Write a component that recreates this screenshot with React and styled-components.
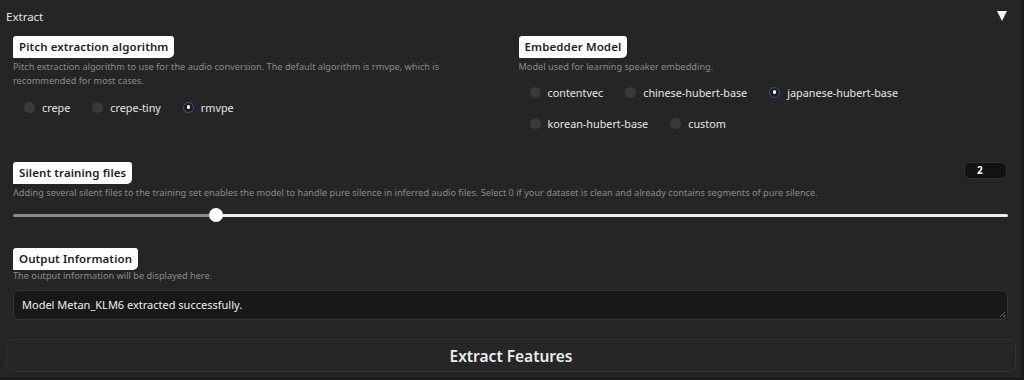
import React from "react";
import styled, { createGlobalStyle } from "styled-components";

const Global = createGlobalStyle`
  html, body { margin: 0; padding: 0; background: #1b1b1b; }
  body { font-family: "Noto Sans", "Liberation Sans", sans-serif; }
  * { box-sizing: border-box; }
`;

const Panel = styled.div`
  width: 1022px;
  height: 378px;
  background: #252525;
  border-right: 1px solid #1a1a1a;
  border-bottom: 1px solid #1a1a1a;
  padding: 7px 6px 0 6px;
  display: flex;
  flex-direction: column;
`;

const Header = styled.div`
  display: flex;
  justify-content: space-between;
  align-items: center;
  height: 18px;
  color: #e4e4e4;
  font-size: 11.5px;
  padding-right: 8px;
`;

const Arrow = styled.span`
  width: 0;
  height: 0;
  border-left: 5.5px solid transparent;
  border-right: 5.5px solid transparent;
  border-top: 10px solid #f4f4f4;
`;

const Body = styled.div`
  padding: 11px 7px 0 7px;
  display: flex;
  flex-direction: column;
`;

const Columns = styled.div`
  display: grid;
  grid-template-columns: 1fr 1fr;
  column-gap: 16px;
  height: 126px;
`;

const Block = styled.div`
  display: flex;
  flex-direction: column;
`;

const Label = styled.span`
  align-self: flex-start;
  background: #fff;
  color: #1d1d1d;
  font-size: 11.5px;
  font-weight: 600;
  height: 22px;
  line-height: 22px;
  padding: 0 6px;
  border-radius: 3px 3px 5px 0;
  letter-spacing: 0.1px;
`;

const Desc = styled.div`
  color: #8a8a8a;
  font-size: 9.2px;
  line-height: 14px;
  margin-top: ${(p) => (p.$mt !== undefined ? p.$mt : 2)}px;
  max-width: ${(p) => p.$max || "none"};
`;

const Radios = styled.div`
  display: flex;
  flex-wrap: wrap;
  column-gap: 22px;
  row-gap: 9px;
  padding-left: 11px;
  margin-top: ${(p) => p.$mt || 10}px;
  max-width: 420px;
`;

const RadioItem = styled.label`
  display: flex;
  align-items: center;
  gap: 7px;
  color: #e6e6e6;
  font-size: 10.8px;
  height: 22px;
`;

const Dot = styled.span`
  width: 11px;
  height: 11px;
  border-radius: 50%;
  background: ${(p) => (p.$on ? "#1e1e1e" : "#3a3a3a")};
  border: ${(p) => (p.$on ? "1.5px solid #3556a8" : "none")};
  display: flex;
  align-items: center;
  justify-content: center;
  &::after {
    content: "";
    display: ${(p) => (p.$on ? "block" : "none")};
    width: 3.5px;
    height: 3.5px;
    border-radius: 50%;
    background: #fff;
  }
`;

const Section = styled.div`
  display: flex;
  flex-direction: column;
  margin-top: ${(p) => p.$mt || 0}px;
`;

const TopRow = styled.div`
  display: flex;
  justify-content: space-between;
  align-items: flex-start;
`;

const NumberBox = styled.div`
  width: 43px;
  height: 17px;
  background: #121212;
  border: 1px solid #323232;
  border-radius: 6px;
  color: #fff;
  font-size: 10px;
  font-weight: 700;
  line-height: 15px;
  padding-left: 12px;
  margin-right: 1px;
`;

const Slider = styled.div`
  position: relative;
  height: 14px;
  margin-top: 8px;
  display: flex;
  align-items: center;
`;

const Track = styled.div`
  height: 3px;
  width: 100%;
  background: linear-gradient(
    to right,
    #8a8a8a 0,
    #8a8a8a ${(p) => p.$pct}%,
    #ececec ${(p) => p.$pct}%,
    #ececec 100%
  );
  border-radius: 2px;
`;

const Thumb = styled.div`
  position: absolute;
  top: 0;
  width: 14px;
  height: 14px;
  border-radius: 50%;
  background: #fff;
  margin-left: -7px;
`;

const Output = styled.div`
  margin-top: 7px;
  height: 30px;
  background: #181818;
  border: 1px solid #333;
  border-radius: 6px;
  color: #f0f0f0;
  font-size: 11px;
  line-height: 28px;
  padding-left: 8px;
  position: relative;
  &::after {
    content: "";
    position: absolute;
    right: 2px;
    bottom: 2px;
    width: 5px;
    height: 5px;
    background: linear-gradient(135deg, transparent 45%, #666 45%, #666 55%, transparent 55%, transparent 75%, #666 75%);
  }
`;

const Button = styled.button`
  margin: 19px 0 0 0;
  width: 1010px;
  height: 33px;
  background: #262626;
  border: 1px solid #333;
  border-radius: 6px;
  color: #ededed;
  font-family: inherit;
  font-size: 15.5px;
  font-weight: 600;
`;

function Radio({ label, on }) {
  return (
    <RadioItem>
      <Dot $on={on} />
      {label}
    </RadioItem>
  );
}

export default function App() {
  const pct = 20.4;
  return (
    <>
      <Global />
      <Panel>
        <Header>
          <span>Extract</span>
          <Arrow />
        </Header>
        <Body>
          <Columns>
            <Block>
              <Label>Pitch extraction algorithm</Label>
              <Desc $max="445px">
                Pitch extraction algorithm to use for the audio conversion. The default
                algorithm is rmvpe, which is recommended for most cases.
              </Desc>
              <Radios $mt={8}>
                <Radio label="crepe" />
                <Radio label="crepe-tiny" />
                <Radio label="rmvpe" on />
              </Radios>
            </Block>
            <Block>
              <Label>Embedder Model</Label>
              <Desc>Model used for learning speaker embedding.</Desc>
              <Radios $mt={7}>
                <Radio label="contentvec" />
                <Radio label="chinese-hubert-base" />
                <Radio label="japanese-hubert-base" on />
                <Radio label="korean-hubert-base" />
                <Radio label="custom" />
              </Radios>
            </Block>
          </Columns>
          <Section>
            <TopRow>
              <Label>Silent training files</Label>
              <NumberBox>2</NumberBox>
            </TopRow>
            <Desc>
              Adding several silent files to the training set enables the model to handle
              pure silence in inferred audio files. Select 0 if your dataset is clean and
              already contains segments of pure silence.
            </Desc>
            <Slider>
              <Track $pct={pct} />
              <Thumb style={{ left: `${pct}%` }} />
            </Slider>
          </Section>
          <Section $mt={26}>
            <Label>Output Information</Label>
            <Desc $mt={-1}>The output information will be displayed here.</Desc>
            <Output>Model Metan_KLM6 extracted successfully.</Output>
          </Section>
        </Body>
        <Button>Extract Features</Button>
      </Panel>
    </>
  );
}
